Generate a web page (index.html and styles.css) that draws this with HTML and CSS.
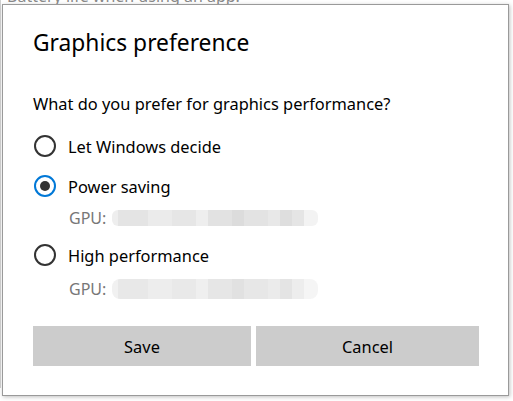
FILE: index.html
```html
<!DOCTYPE html>
<html lang="en">
<head>
  <meta charset="UTF-8">
  <meta name="viewport" content="width=device-width, initial-scale=1.0">
  <link rel="stylesheet" href="styles.css">
</head>
<body>

<div class="backdrop">
  <div class="backdrop-text">Battery life when using an app.</div>
</div>

<div class="dialog">
  <h1>Graphics preference</h1>

  <p class="question">What do you prefer for graphics performance?</p>

  <div class="option first">
    <span class="radio"></span>
    <span class="label">Let Windows decide</span>
  </div>

  <div class="option">
    <span class="radio checked"></span>
    <span class="label">Power saving</span>
  </div>
  <div class="gpu">
    GPU: <span class="blur blur-a"></span>
  </div>

  <div class="option after-gpu">
    <span class="radio"></span>
    <span class="label">High performance</span>
  </div>
  <div class="gpu gpu-last">
    GPU: <span class="blur blur-b"></span>
  </div>

  <div class="buttons">
    <button class="btn btn-save">Save</button>
    <button class="btn btn-cancel">Cancel</button>
  </div>
</div>

</body>
</html>
```

FILE: styles.css
```css
html, body {
  margin: 0;
  padding: 0;
}
body {
  font-family: 'Noto Sans', 'Open Sans', Arial, sans-serif;
  color: #000000;
  background-color: #ffffff;
  width: 513px;
  height: 401px;
  overflow: hidden;
  position: relative;
}
.backdrop {
  height: 401px;
  border-left: 1px solid #d0d0d0;
}
.backdrop-text {
  margin-top: -13px;
  padding-left: 6px;
  font-size: 16px;
  line-height: 18px;
  color: #8a8a8a;
  white-space: nowrap;
}
.dialog {
  position: absolute;
  left: 2px;
  top: 4px;
  width: 507px;
  height: 392px;
  box-sizing: border-box;
  background-color: #ffffff;
  border: 1px solid #9a9a9a;
  box-shadow: 1px 1px 4px rgba(0, 0, 0, 0.25);
  padding: 0 28px 0 30px;
}
h1 {
  font-size: 22.8px;
  font-weight: 400;
  margin: 22px 0 0 0;
  line-height: 32px;
}
.question {
  font-size: 16.4px;
  margin: 33px 0 0 0;
  line-height: 24px;
}
.option {
  display: flex;
  align-items: center;
  margin-top: 8px;
  height: 32px;
}
.option.first {
  margin-top: 14px;
}
.option.after-gpu {
  margin-top: 9px;
}
.radio {
  width: 18px;
  height: 18px;
  margin-left: 1px;
  border: 2px solid #333333;
  border-radius: 50%;
  display: flex;
  align-items: center;
  justify-content: center;
  flex-shrink: 0;
}
.radio.checked {
  border-color: #0078d7;
}
.radio.checked::after {
  content: "";
  width: 10px;
  height: 10px;
  border-radius: 50%;
  background-color: #333333;
}
.label {
  font-size: 16.4px;
  margin-left: 12px;
}
.gpu {
  display: flex;
  align-items: center;
  height: 24px;
  margin-top: 4px;
  padding-left: 36px;
  font-size: 16px;
  color: #777777;
}
.gpu.gpu-last {
  margin-top: 6px;
}
.blur {
  display: inline-block;
  margin-left: 6px;
  width: 206px;
  height: 16px;
  border-radius: 6px;
}
.blur-a {
  background:
    linear-gradient(90deg,
      #eeeeee 0, #eeeeee 6px, #e4e4e4 6px, #e4e4e4 36px, #ebebeb 36px, #ebebeb 60px,
      #e6e6e6 60px, #e6e6e6 84px, #eeeeee 84px, #eeeeee 96px, #e2e2e2 96px, #e2e2e2 120px,
      #dcdcdc 120px, #dcdcdc 132px, #e3e3e3 132px, #e3e3e3 156px, #e8e8e8 156px, #e8e8e8 168px,
      #dedede 168px, #dedede 180px, #e5e5e5 180px, #e5e5e5 192px, #f3f3f3 192px);
}
.blur-b {
  height: 20px;
  border-radius: 8px;
  background:
    linear-gradient(90deg,
      #f1f1f1 0, #f1f1f1 6px, #e8e8e8 6px, #e8e8e8 36px, #ededed 36px, #ededed 60px,
      #e9e9e9 60px, #e9e9e9 84px, #efefef 84px, #efefef 96px, #e6e6e6 96px, #e6e6e6 120px,
      #e1e1e1 120px, #e1e1e1 132px, #e7e7e7 132px, #e7e7e7 156px, #ebebeb 156px, #ebebeb 168px,
      #e4e4e4 168px, #e4e4e4 180px, #ededed 180px, #ededed 192px, #f5f5f5 192px);
}
.buttons {
  display: flex;
  gap: 5px;
  margin-top: 25px;
}
.btn {
  height: 40px;
  border: none;
  background-color: #cccccc;
  font-family: inherit;
  font-size: 16.4px;
  color: #000000;
  padding: 0;
}
.btn-save {
  width: 218px;
}
.btn-cancel {
  width: 223px;
}
```
